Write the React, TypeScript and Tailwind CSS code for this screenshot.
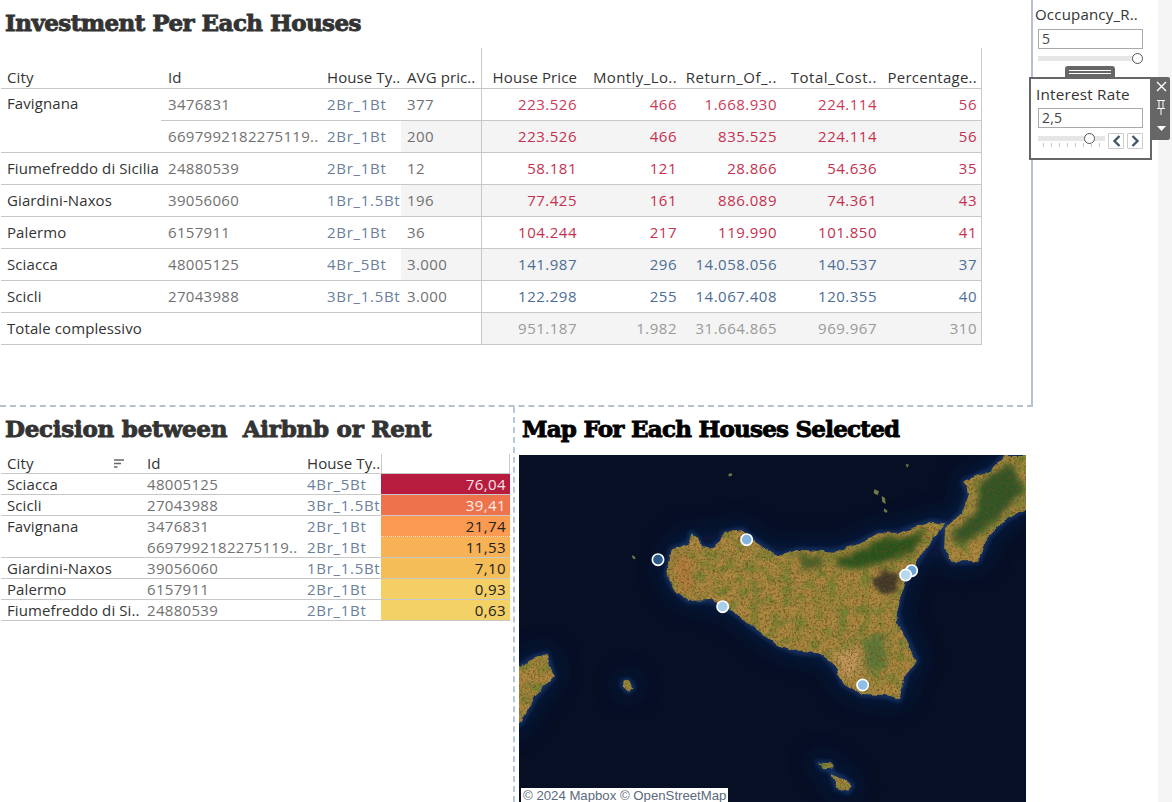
const titleFont = "font-['DejaVu_Serif',serif] font-bold text-[23px] leading-none [-webkit-text-stroke:0.9px_currentColor]";

const invest = [
  { city: "Favignana", id: "3476831", type: "2Br_1Bt", avg: "377", price: "223.526", loan: "466", ret: "1.668.930", cost: "224.114", pct: "56", tone: "text-[#cb3a58]", shade: false, inner: true },
  { city: "", id: "6697992182275119..", type: "2Br_1Bt", avg: "200", price: "223.526", loan: "466", ret: "835.525", cost: "224.114", pct: "56", tone: "text-[#c4304f]", shade: true, inner: false },
  { city: "Fiumefreddo di Sicilia", id: "24880539", type: "2Br_1Bt", avg: "12", price: "58.181", loan: "121", ret: "28.866", cost: "54.636", pct: "35", tone: "text-[#c4304f]", shade: false, inner: false },
  { city: "Giardini-Naxos", id: "39056060", type: "1Br_1.5Bt", avg: "196", price: "77.425", loan: "161", ret: "886.089", cost: "74.361", pct: "43", tone: "text-[#c4304f]", shade: true, inner: false },
  { city: "Palermo", id: "6157911", type: "2Br_1Bt", avg: "36", price: "104.244", loan: "217", ret: "119.990", cost: "101.850", pct: "41", tone: "text-[#c4304f]", shade: false, inner: false },
  { city: "Sciacca", id: "48005125", type: "4Br_5Bt", avg: "3.000", price: "141.987", loan: "296", ret: "14.058.056", cost: "140.537", pct: "37", tone: "text-[#4c6d94]", shade: true, inner: false },
  { city: "Scicli", id: "27043988", type: "3Br_1.5Bt", avg: "3.000", price: "122.298", loan: "255", ret: "14.067.408", cost: "120.355", pct: "40", tone: "text-[#4c6d94]", shade: false, inner: false },
];

const decision = [
  { city: "Sciacca", id: "48005125", type: "4Br_5Bt", val: "76,04", bg: "bg-[#b71c3f]", fg: "text-[#f4e3e6]", line: true },
  { city: "Scicli", id: "27043988", type: "3Br_1.5Bt", val: "39,41", bg: "bg-[#ee734d]", fg: "text-[#fdeee8]", line: true },
  { city: "Favignana", id: "3476831", type: "2Br_1Bt", val: "21,74", bg: "bg-[#fb9a50]", fg: "text-[#222]", line: false },
  { city: "", id: "6697992182275119..", type: "2Br_1Bt", val: "11,53", bg: "bg-[#f6b254]", fg: "text-[#222]", line: true },
  { city: "Giardini-Naxos", id: "39056060", type: "1Br_1.5Bt", val: "7,10", bg: "bg-[#f5bd58]", fg: "text-[#222]", line: true },
  { city: "Palermo", id: "6157911", type: "2Br_1Bt", val: "0,93", bg: "bg-[#f3cf65]", fg: "text-[#222]", line: true },
  { city: "Fiumefreddo di Si..", id: "24880539", type: "2Br_1Bt", val: "0,63", bg: "bg-[#f3d166]", fg: "text-[#222]", line: true },
];

function InvestTable() {
  return (
    <div className="ml-px w-[981px] text-[15px] leading-none tracking-[0.1px]">
      <div className="grid grid-cols-[160px_166px_74px_81px_95px_100px_100px_100px_100px_5px] h-[41px] border-b border-[#c8c8c8] text-[#333] items-end pb-[3px] whitespace-nowrap">
        <span className="pl-[6px]">City</span>
        <span className="pl-[7px]">Id</span>
        <span>House Ty..</span>
        <span className="self-stretch -mb-[3px] pb-[3px] pl-[6px] flex items-end border-r border-[#c8c8c8]">AVG pric..</span>
        <span className="text-right">House Price</span>
        <span className="text-right tracking-[0.4px]">Montly_Lo..</span>
        <span className="text-right tracking-[0.5px]">Return_Of_..</span>
        <span className="text-right tracking-[0.5px]">Total_Cost..</span>
        <span className="text-right tracking-[0.25px]">Percentage..</span>
        <span className="self-stretch -mb-[3px] border-r border-[#c8c8c8]" />
      </div>
      {invest.map((r) => (
        <div key={r.id} className="grid grid-cols-[160px_1fr] h-[32px]">
          <div className={`pl-[6px] flex items-center text-[#333] whitespace-nowrap ${r.inner ? "pb-[3px]" : "border-b border-[#c8c8c8]"}`}>{r.city}</div>
          <div className="grid grid-cols-[166px_74px_81px_95px_100px_100px_100px_100px_5px] items-center border-b border-[#c8c8c8]">
            <span className="pl-[7px] text-[#717171] whitespace-nowrap tracking-[0.3px]">{r.id}</span>
            <span className="text-[#6a7f9c] whitespace-nowrap tracking-[0.7px]">{r.type}</span>
            <span className={`self-stretch flex items-center pl-[6px] text-[#717171] tracking-[0.4px] border-r border-[#c8c8c8] ${r.shade ? "bg-[#f4f4f4]" : ""}`}>{r.avg}</span>
            {[r.price, r.loan, r.ret, r.cost, r.pct].map((v, i) => (
              <span key={i} className={`self-stretch flex items-center justify-end tracking-[0.5px] ${r.tone} ${r.shade ? "bg-[#f4f4f4]" : ""}`}>{v}</span>
            ))}
            <span className={`self-stretch border-r border-[#c8c8c8] ${r.shade ? "bg-[#f4f4f4]" : ""}`} />
          </div>
        </div>
      ))}
      <div className="grid grid-cols-[480px_1fr] h-[32px] border-b border-[#c8c8c8]">
        <div className="pl-[6px] flex items-center text-[#333]">Totale complessivo</div>
        <div className="grid grid-cols-[95px_100px_100px_100px_100px_5px] items-center bg-[#f4f4f4] border-l border-[#c8c8c8] text-[#9a9a9a] tracking-[0.5px]">
          <span className="text-right">951.187</span>
          <span className="text-right">1.982</span>
          <span className="text-right">31.664.865</span>
          <span className="text-right">969.967</span>
          <span className="text-right">310</span>
          <span className="self-stretch border-r border-[#c8c8c8]" />
        </div>
      </div>
    </div>
  );
}

function DecisionTable() {
  return (
    <div className="ml-px w-[509px] text-[15px] leading-none tracking-[0.1px]">
      <div className="grid grid-cols-[146px_160px_74px_129px] h-[20px] border-b border-[#c8c8c8] items-center text-[#333]">
        <span className="pl-[6px] flex items-center justify-between pr-[22px]">
          City
          <svg width="11" height="10" viewBox="0 0 11 10" className="text-[#666]">
            <path d="M0 1h10M0 4.5h7M0 8h3.5" stroke="currentColor" strokeWidth="1.6" fill="none" />
          </svg>
        </span>
        <span>Id</span>
        <span className="whitespace-nowrap">House Ty..</span>
        <span className="self-stretch border-x border-[#c8c8c8]" />
      </div>
      {decision.map((r) => (
        <div key={r.id} className="grid grid-cols-[146px_1fr] h-[21px]">
          <div className={`pl-[6px] flex items-center text-[#333] whitespace-nowrap ${r.line ? "border-b border-[#c8c8c8]" : ""}`}>{r.city}</div>
          <div className={`grid grid-cols-[160px_74px_129px] items-center ${r.line ? "border-b border-[#c8c8c8]" : ""}`}>
            <span className="text-[#717171] whitespace-nowrap tracking-[0.3px]">{r.id}</span>
            <span className="text-[#6a7f9c] whitespace-nowrap tracking-[0.7px]">{r.type}</span>
            <span className={`self-stretch flex items-center justify-end pr-[4px] tracking-[0.4px] ${r.bg} ${r.fg} ${r.line ? "" : "border-b border-dotted border-[#f4e7c8]"}`}>{r.val}</span>
          </div>
        </div>
      ))}
    </div>
  );
}

const sicily = "M455 375L470 300L520 282L530 250L545 262L558 292L590 296L620 272L625 250L680 240L715 270L745 290L790 318L850 300L960 305L1030 282L1090 250L1150 252L1185 236L1250 215L1288 222L1250 270L1210 330L1175 380L1160 420L1145 480L1150 520L1175 570L1205 632L1172 672L1152 750L1110 735L1040 732L985 700L960 650L920 610L850 605L790 585L720 535L650 480L590 450L520 452L480 420Z";
const calabria = "M1470 15L1535 15L1535 175L1470 210L1420 260L1390 332L1310 335L1288 300L1290 235L1340 190L1362 130L1345 95L1430 60Z";
const tunisia = "M0 660L60 622L95 612L115 680L60 740L20 815L0 830Z";
const pins = [
  { x: 429, y: 329, c: "#2a5a8c" },
  { x: 695, y: 269, c: "#84b4de" },
  { x: 623, y: 470, c: "#a8cfea" },
  { x: 1043, y: 705, c: "#8fbfe6" },
  { x: 1190, y: 362, c: "#6ea6d6" },
  { x: 1172, y: 375, c: "#b5d8ef" },
];

function SatelliteMap() {
  const land = `${sicily} ${calabria} ${tunisia} M322 695L340 690L355 712L340 725L322 708Z M910 938L945 940L950 955L925 958Z M950 970L985 985L1010 1005L1000 1025L965 1012Z`;
  return (
    <div className="relative w-[507px] h-[347px] overflow-hidden bg-[#060f24]">
      <svg viewBox="12 15 1521 1041" className="block w-full h-full">
        <defs>
          <filter id="blur40" x="-30%" y="-30%" width="160%" height="160%"><feGaussianBlur stdDeviation="36" /></filter>
          <filter id="blur10" x="-20%" y="-20%" width="140%" height="140%"><feGaussianBlur stdDeviation="7" /></filter>
          <filter id="blur20" x="-20%" y="-20%" width="140%" height="140%"><feGaussianBlur stdDeviation="10" /></filter>
          <filter id="rough" x="-5%" y="-5%" width="110%" height="110%">
            <feTurbulence type="fractalNoise" baseFrequency="0.03" numOctaves="3" seed="7" result="n" />
            <feDisplacementMap in="SourceGraphic" in2="n" scale="16" xChannelSelector="R" yChannelSelector="G" />
          </filter>
          <filter id="patch" x="0" y="0" width="100%" height="100%" colorInterpolationFilters="sRGB">
            <feTurbulence type="fractalNoise" baseFrequency="0.03" numOctaves="4" seed="11" />
            <feColorMatrix values="0 0 0 0 0.45  0 0 0 0 0.52  0 0 0 0 0.2  2.4 0 0 0 -0.95" />
            <feComposite in2="SourceGraphic" operator="in" />
          </filter>
          <filter id="speck" x="0" y="0" width="100%" height="100%" colorInterpolationFilters="sRGB">
            <feTurbulence type="fractalNoise" baseFrequency="0.16" numOctaves="3" seed="3" />
            <feColorMatrix values="0 0 0 0 0.42  0 0 0 0 0.3  0 0 0 0 0.12  2 0 0 0 -0.85" />
            <feComposite in2="SourceGraphic" operator="in" />
          </filter>
          <clipPath id="landClip"><path d={land} /></clipPath>
        </defs>
        <path d={land} fill="#10285a" stroke="#10285a" strokeWidth="30" opacity="0.6" filter="url(#blur40)" />
        <path d={land} fill="none" stroke="#1c4c8c" strokeWidth="12" opacity="0.65" filter="url(#blur10)" />
        <g filter="url(#rough)">
          <path d={land} fill="#ad8a42" />
          <g clipPath="url(#landClip)">
            <path d={land} fill="#000" filter="url(#patch)" />
            <g filter="url(#blur20)">
              <path d="M960 330L1060 290L1110 262L1180 262L1240 232L1200 300L1120 335L1040 352L970 352Z" fill="#24531f" />
              <path d="M850 315L930 320L920 350L860 360Z" fill="#46622a" />
              <path d="M1400 90L1490 40L1525 120L1440 215L1340 285L1305 255L1380 190Z" fill="#2a5526" />
              <path d="M1040 570L1110 550L1110 650L1060 670Z" fill="#5c7c3a" />
              <path d="M475 320L520 300L540 400L500 430Z" fill="#b5803f" />
              <path d="M960 610L1040 590L1030 680L980 680Z" fill="#c39a5c" />
            </g>
            <g filter="url(#blur10)">
              <path d="M1072 392L1112 355L1155 385L1140 428L1090 428Z" fill="#3a342a" />
            </g>
            <path d={land} fill="#000" filter="url(#speck)" />
          </g>
        </g>
        <path d="M1078 118l14 6l-4 12l-12 -6Z M1100 138l10 6l2 18l-10 -6Z M1108 175l10 8l-4 6l-8 -6Z M640 72l10 -2l2 6l-10 4Z M350 316l8 2l4 10l-8 -2Z M1172 42l10 2l-6 10Z" fill="#6f7a45" />
        {pins.map((p) => (
          <circle key={p.x} cx={p.x} cy={p.y} r="17" fill={p.c} stroke="#fff" strokeWidth="5" />
        ))}
      </svg>
      <div className="absolute left-[2px] bottom-0 h-[14px] px-[2px] overflow-hidden bg-white text-[13.2px] leading-[16px] text-[#5a6a7c] font-['Liberation_Sans',sans-serif] whitespace-nowrap">© 2024 Mapbox © OpenStreetMap</div>
    </div>
  );
}

function Slider({ pos, ticks }: { pos: number; ticks?: boolean }) {
  return (
    <div className={`relative ${ticks ? "w-[67px]" : "w-[102px]"} h-[12px]`}>
      <div className="absolute inset-x-0 top-[3px] h-[5px] bg-[#e6e6e6]" />
      <div className="absolute top-0 w-[11px] h-[11px] rounded-full border border-[#555] bg-white" style={{ left: pos }} />
      {ticks && (
        <div className="absolute inset-x-[5px] top-[10px] flex justify-between">
          {[0, 1, 2, 3, 4, 5, 6, 7].map((i) => (
            <span key={i} className="w-px h-[4px] bg-[#c8c8c8]" />
          ))}
        </div>
      )}
    </div>
  );
}

function Filters() {
  return (
    <div className="relative w-[125px] h-[406px] pl-[2px] pt-[6px] text-[15px] leading-none text-[#333] tracking-[0.2px]">
      <div className="h-[16px] flex items-center whitespace-nowrap">Occupancy_R..</div>
      <div className="ml-[3px] mt-[7px] w-[105px] h-[20px] border border-[#aaa] pl-[3px] flex items-center text-[14px] text-[#444]">5</div>
      <div className="ml-[3px] mt-[4px]"><Slider pos={94} /></div>

      {/* floating quick filter with its toolbar */}
      <div className="absolute left-[-4px] top-[66px] w-[141px]">
        <div className="ml-[36px] w-[50px] h-[11px] rounded-t-[3px] bg-[#666] flex flex-col justify-center gap-[2px] px-[4px]">
          <span className="h-px bg-white" />
          <span className="h-px bg-white" />
        </div>
        <div className="flex items-start">
          <div className="w-[123px] h-[83px] border-[2px] border-[#666] bg-white pl-[7px] pt-[6px]">
            <div className="-ml-[2px] text-[15.3px] h-[20px] flex items-center">Interest Rate</div>
            <div className="mt-[3px] w-[105px] h-[20px] border border-[#aaa] pl-[3px] flex items-center text-[14px] text-[#444]">2,5</div>
            <div className="mt-[5px] flex items-start">
              <Slider pos={46} ticks />
              <span className="ml-[3px] w-[16px] h-[16px] border border-[#ccc] rounded-[1px] flex items-center justify-center">
                <svg width="9" height="12" viewBox="0 0 9 12"><path d="M7.5 1L2.5 6L7.5 11" stroke="#44546a" strokeWidth="2.4" fill="none" /></svg>
              </span>
              <span className="ml-[3px] w-[16px] h-[16px] border border-[#ccc] rounded-[1px] flex items-center justify-center">
                <svg width="9" height="12" viewBox="0 0 9 12"><path d="M1.5 1L6.5 6L1.5 11" stroke="#44546a" strokeWidth="2.4" fill="none" /></svg>
              </span>
            </div>
          </div>
          <div className="w-[18px] h-[63px] bg-[#666] rounded-r-[2px] flex flex-col items-center pt-[3px]">
            <svg width="13" height="13" viewBox="0 0 13 13"><path d="M2 2L11 11M11 2L2 11" stroke="#fff" strokeWidth="1.4" /></svg>
            <svg width="10" height="16" viewBox="0 0 10 16" className="mt-[6px]"><path d="M1 1.5H9M3 1.5V9.5M7 1.5V9.5M1 9.5H9M5 9.5V16" stroke="#fff" strokeWidth="1" fill="none" /></svg>
            <svg width="9" height="5" viewBox="0 0 9 5" className="mt-[11px]"><path d="M0 0H9L4.5 5Z" fill="#fff" /></svg>
          </div>
        </div>
      </div>
    </div>
  );
}

export default function App() {
  return (
    <div className="flex h-[802px] w-[1172px] overflow-hidden bg-white font-['Open_Sans',sans-serif]">
      <div className="w-[1033px]">
        <div className="h-[407px] border-r-[2px] border-b-[2px] border-[#b8c0d0] [border-bottom-style:dashed]">
          <h1 className={`${titleFont} tracking-[-0.55px] pl-[5px] pt-[11px] h-[48px] text-[#333]`}>Investment Per Each Houses</h1>
          <InvestTable />
        </div>
        <div className="flex h-[395px]">
          <div className="w-[515px] border-r-[2px] border-dashed border-[#b8c8dc]">
            <h2 className={`${titleFont} tracking-[-0.25px] pl-[5px] pt-[10px] h-[47px] text-[#333] whitespace-nowrap`}>Decision between&nbsp; Airbnb or Rent</h2>
            <DecisionTable />
          </div>
          <div className="pl-[4px]">
            <h2 className={`${titleFont} tracking-[-0.75px] pl-[3px] pt-[10px] h-[48px] text-black whitespace-nowrap`}>Map For Each Houses Selected</h2>
            <SatelliteMap />
          </div>
        </div>
      </div>
      <Filters />
      <div className="flex-1 bg-[#f5f5f5]" />
    </div>
  );
}
